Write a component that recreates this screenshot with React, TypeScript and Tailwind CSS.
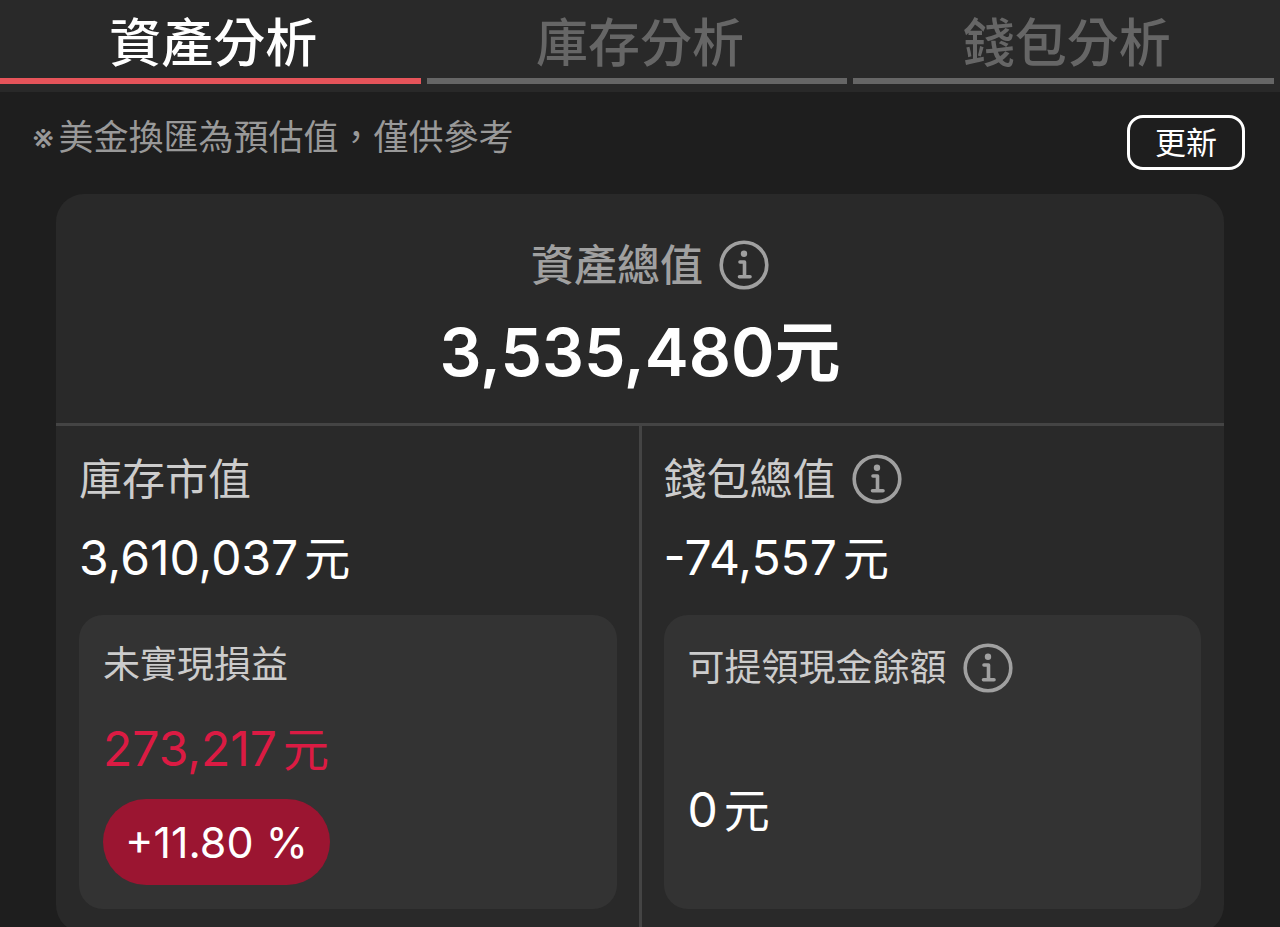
import React, { useState } from 'react'
import clsx from 'clsx'

const TABS = ['資產分析', '庫存分析', '錢包分析']

function InfoButton({ label }: { label: string }) {
  return (
    <button type="button" aria-label={label} className="shrink-0 text-[#a0a0a0]">
      <svg
        viewBox="0 0 50 50"
        className="block size-[50px]"
        fill="none"
        stroke="currentColor"
        strokeWidth="3.6"
        strokeLinecap="round"
        strokeLinejoin="round"
      >
        <circle cx="25" cy="25" r="22.8" />
        <circle cx="25" cy="13.7" r="3.2" fill="currentColor" stroke="none" />
        <path d="M21 22H25.5V36.8M20.5 36.8H31" />
      </svg>
    </button>
  )
}

function Amount({ value, className }: { value: string; className?: string }) {
  return (
    <p className={clsx('flex items-center gap-1.5 text-[48px] leading-[60px]', className)}>
      <span>{value}</span>
      <span className="text-[46px]">元</span>
    </p>
  )
}

export default function App() {
  const [activeTab, setActiveTab] = useState(TABS[0])

  return (
    <div className="min-h-screen bg-[#1e1e1e] font-['Inter','Noto_Sans_CJK_TC',sans-serif] text-white">
      <nav className="flex gap-1.5 bg-[#292929] pr-1.5 pb-2">
        {TABS.map((tab) => (
          <button
            key={tab}
            type="button"
            onClick={() => setActiveTab(tab)}
            className={clsx(
              'flex-1 border-b-6 pt-[11px] pb-0.5 pl-1.5 text-[52px] leading-[65px] font-medium',
              tab === activeTab ? 'border-[#e6545a] text-white' : 'border-[#666666] text-[#666666]'
            )}
          >
            {tab}
          </button>
        ))}
      </nav>

      <div className="flex items-start justify-between pt-[23px] pr-[35px] pb-6 pl-8">
        <p className="flex items-center gap-1 text-[35px] leading-[44px] text-[#999999]">
          <span>※</span>
          <span>美金換匯為預估值，僅供參考</span>
        </p>
        <button
          type="button"
          className="rounded-2xl border-3 border-white px-[25px] text-[31px] leading-[49px]"
        >
          更新
        </button>
      </div>

      <main className="mx-14 rounded-[28px] bg-[#292929]">
        <section className="flex flex-col items-center border-b-3 border-[#444444] pt-[46px] pb-[29px]">
          <div className="flex items-center gap-4 pl-5">
            <h2 className="text-[43px] leading-[50px] font-medium text-[#a0a0a0]">資產總值</h2>
            <InfoButton label="資產總值說明" />
          </div>
          <p className="mt-5 flex items-center text-[66px] leading-[84px] font-semibold">
            <span>3,535,480</span>
            <span>元</span>
          </p>
        </section>

        <div className="flex">
          <section className="flex flex-1 flex-col pt-7 pr-[22px] pb-6 pl-[23px]">
            <h3 className="text-[43px] leading-[50px] text-[#cccccc]">庫存市值</h3>
            <Amount value="3,610,037" className="mt-6" />
            <div className="mt-[27px] flex-1 rounded-3xl bg-[#333333] px-6 pt-7 pb-6">
              <h4 className="text-[37px] leading-[44px] text-[#cccccc]">未實現損益</h4>
              <Amount value="273,217" className="mt-8 text-[#db1b43]" />
              <p className="mt-5 w-fit rounded-full bg-[#9b1531] px-[22px] text-[43px] leading-[86px]">
                +11.80 %
              </p>
            </div>
          </section>

          <div className="w-[3px] bg-[#444444]" />

          <section className="flex flex-1 flex-col pt-7 pr-[23px] pb-6 pl-[22px]">
            <div className="flex items-center gap-4">
              <h3 className="text-[43px] leading-[50px] text-[#cccccc]">錢包總值</h3>
              <InfoButton label="錢包總值說明" />
            </div>
            <Amount value="-74,557" className="mt-6" />
            <div className="mt-[27px] flex-1 rounded-3xl bg-[#333333] px-6 pt-7 pb-6">
              <div className="flex items-center gap-4">
                <h4 className="text-[37px] leading-[50px] text-[#cccccc]">可提領現金餘額</h4>
                <InfoButton label="可提領現金餘額說明" />
              </div>
              <Amount value="0" className="mt-[87px]" />
            </div>
          </section>
        </div>
      </main>
    </div>
  )
}
